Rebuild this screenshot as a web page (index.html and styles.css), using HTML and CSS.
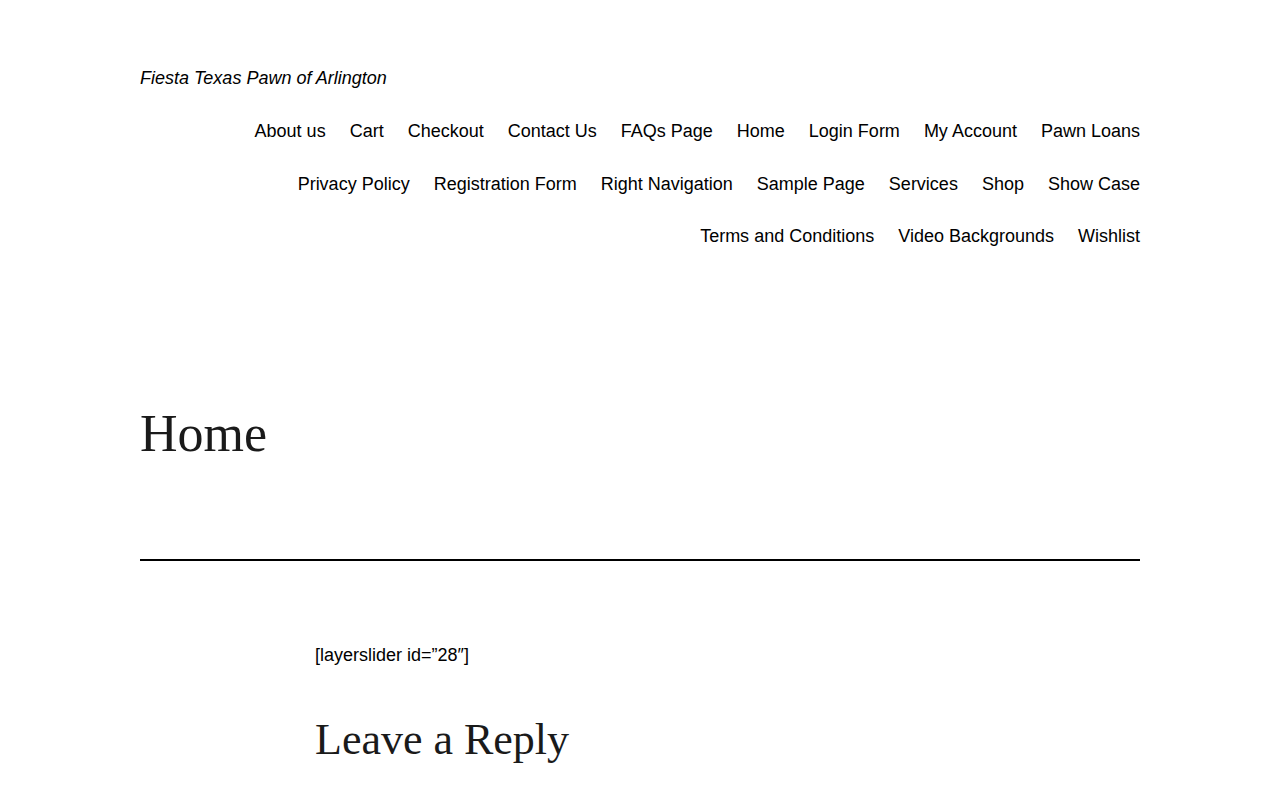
FILE: index.html
```html
<!DOCTYPE html>
<html lang="en">
<head>
<meta charset="utf-8">
<title>Home – Fiesta Texas Pawn of Arlington</title>
<link rel="stylesheet" href="styles.css">
</head>
<body>
<div class="site">
  <header class="site-header">
    <p class="site-title"><a href="#">Fiesta Texas Pawn of Arlington</a></p>
    <nav class="primary-nav">
      <ul class="menu">
        <li><a href="#">About us</a></li>
        <li><a href="#">Cart</a></li>
        <li><a href="#">Checkout</a></li>
        <li><a href="#">Contact Us</a></li>
        <li><a href="#">FAQs Page</a></li>
        <li><a href="#">Home</a></li>
        <li><a href="#">Login Form</a></li>
        <li><a href="#">My Account</a></li>
        <li><a href="#">Pawn Loans</a></li>
        <li><a href="#">Privacy Policy</a></li>
        <li><a href="#">Registration Form</a></li>
        <li><a href="#">Right Navigation</a></li>
        <li><a href="#">Sample Page</a></li>
        <li><a href="#">Services</a></li>
        <li><a href="#">Shop</a></li>
        <li><a href="#">Show Case</a></li>
        <li><a href="#">Terms and Conditions</a></li>
        <li><a href="#">Video Backgrounds</a></li>
        <li><a href="#">Wishlist</a></li>
      </ul>
    </nav>
  </header>

  <main class="site-main">
    <header class="entry-header">
      <h1 class="entry-title">Home</h1>
    </header>
    <div class="entry-content">
      <p>[layerslider id=”28″]</p>
    </div>
    <section class="comments">
      <h2 class="reply-title">Leave a Reply</h2>
    </section>
  </main>
</div>
</body>
</html>
```

FILE: styles.css
```css
html, body {
  margin: 0;
  padding: 0;
  background: #fff;
  color: #000;
}

body {
  font-family: "Liberation Sans", Arial, sans-serif;
  font-size: 18px;
}

a {
  color: #000;
  text-decoration: none;
}

.site {
  width: 1000px;
  margin: 0 auto;
  padding-top: 65px;
}

.site-title {
  margin: 0;
  font-size: 18px;
  font-style: italic;
  line-height: 26px;
}

.primary-nav {
  margin-top: 14px;
}

.menu {
  list-style: none;
  margin: 0;
  padding: 0;
  display: flex;
  flex-wrap: wrap;
  justify-content: flex-end;
  column-gap: 24px;
}

.menu a {
  display: block;
  padding: 13px 0;
  line-height: 26.5px;
  font-size: 18px;
}

.entry-header {
  margin-top: 141px;
  padding-bottom: 96px;
  border-bottom: 2px solid #000;
}

.entry-title,
.reply-title {
  margin: 0;
  font-family: "Liberation Serif", "Times New Roman", serif;
  font-weight: 300;
  line-height: 1.15;
  color: #1a1a1a;
}

.entry-title {
  font-size: 52px;
}

.entry-content,
.comments {
  width: 650px;
  margin: 0 auto;
}

.entry-content p {
  margin: 79px 0 0;
  line-height: 30.6px;
  font-size: 18px;
}

.reply-title {
  margin-top: 44px;
  font-size: 44px;
}
```
